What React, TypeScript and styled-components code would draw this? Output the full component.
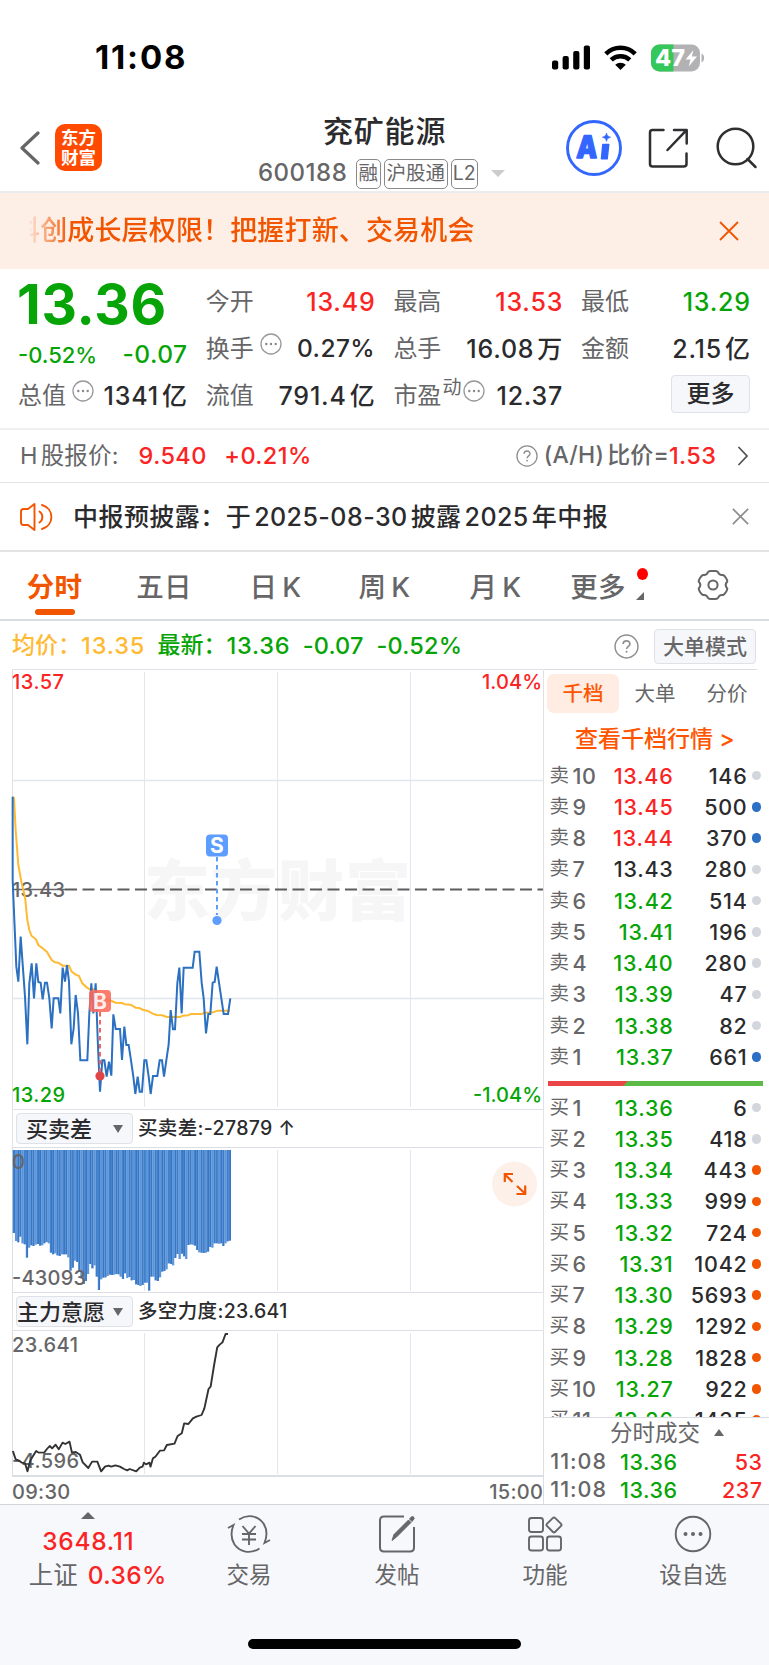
import React from "react";
import styled, { createGlobalStyle } from "styled-components";

const RED = "#fb2424";
const GREEN = "#06a406";
const ORANGE = "#f25500";
const INK = "#2b2b2d";
const GREY = "#666668";
const FONT = `Inter, "Noto Sans CJK SC", sans-serif`;

const Global = createGlobalStyle`
  * { box-sizing: border-box; }
  body { margin: 0; background: #fff; font-family: ${FONT}; }
`;

const Screen = styled.div`
  width: 769px;
  height: 1665px;
  overflow: hidden;
  display: flex;
  flex-direction: column;
  background: #fff;
  color: ${INK};
`;

const Text = styled.span<{ $size?: number; $weight?: number; $color?: string; $ls?: number; $ml?: number }>`
  font-size: ${(p) => p.$size ?? 24}px;
  font-weight: ${(p) => p.$weight ?? 540};
  color: ${(p) => p.$color ?? INK};
  letter-spacing: ${(p) => p.$ls ?? 0}px;
  margin-left: ${(p) => p.$ml ?? 0}px;
  margin-right: ${(p) => -(p.$ls ?? 0)}px;
  line-height: 1.2;
  white-space: pre;
`;

const Space = styled.span<{ $w: number }>`
  width: ${(p) => p.$w}px;
  flex: none;
`;

/* gap between Latin digits and Chinese characters */
const Gap = styled.span`
  display: inline-block;
  width: 3px;
`;

/* ---------- status bar and header ---------- */

const StatusBar = styled.div`
  height: 110px;
  flex: none;
  display: flex;
  justify-content: space-between;
  align-items: center;
  padding: 5px 64px 0 95px;
`;

const StatusIcons = styled.div`
  display: flex;
  align-items: center;
  gap: 14px;
`;

const Header = styled.header`
  height: 83px;
  flex: none;
  display: flex;
  border-bottom: 2px solid #ececee;
`;

const HeaderSide = styled.div<{ $width: number; $pad: number }>`
  width: ${(p) => p.$width}px;
  padding-left: ${(p) => p.$pad}px;
  height: 76px;
  display: flex;
  align-items: center;
`;

const Logo = styled.div`
  width: 47px;
  height: 47px;
  margin: -1px 0 0 15px;
  border-radius: 10px;
  background: #ff4a00;
  color: #fff;
  font-size: 17.5px;
  font-weight: 700;
  line-height: 19.5px;
  text-align: center;
  padding-top: 4px;
`;

const TitleBlock = styled.div`
  width: 280px;
  display: flex;
  flex-direction: column;
  padding-top: 2px;
`;

const TitleName = styled.div`
  font-size: 30px;
  font-weight: 500;
  letter-spacing: 0.8px;
  line-height: 38px;
  padding-left: 81px;
`;

const CodeLine = styled.div`
  display: flex;
  align-items: center;
  flex: none;
  height: 44px;
  padding: 3px 0 0 16px;
`;

const Tag = styled.span<{ $width: number }>`
  width: ${(p) => p.$width}px;
  flex: none;
  height: 30px;
  margin: 1px 3px 0 0;
  border: 1.5px solid #8a8a8c;
  border-radius: 5px;
  color: ${GREY};
  font-size: 19.5px;
  line-height: 27px;
  text-align: center;
  white-space: nowrap;
`;

/* ---------- banner ---------- */

const Banner = styled.div`
  height: 76px;
  flex: none;
  display: flex;
  align-items: center;
  justify-content: space-between;
  padding: 0 30px 0 30px;
  background: #fdeee6;
`;

const Marquee = styled.div`
  width: 600px;
  overflow: hidden;
  mask-image: linear-gradient(90deg, rgba(0, 0, 0, 0.1), #000 40px);
`;

const MarqueeText = styled.div`
  margin-left: -17px;
  font-size: 27px;
  font-weight: 500;
  letter-spacing: 0.15px;
  line-height: 40px;
  color: ${ORANGE};
  white-space: nowrap;
`;

/* ---------- quote ---------- */

const Quote = styled.section`
  height: 161px;
  flex: none;
  display: grid;
  grid-template-columns: repeat(4, 168px);
  grid-template-rows: repeat(3, 47px);
  column-gap: 19.7px;
  padding: 9px 19px 0;
  border-bottom: 2px solid #f0f0f2;
`;

const PriceBlock = styled.div`
  grid-row: span 2;
  display: flex;
  flex-direction: column;
`;

const Price = styled.div`
  font-size: 55px;
  font-weight: 750;
  line-height: 53px;
  letter-spacing: 0.7px;
  margin-left: -2px;
  color: ${GREEN};
`;

const Change = styled.div`
  display: flex;
  justify-content: space-between;
  align-items: center;
  padding-top: 9px;
  margin-left: -1px;
`;

const Cell = styled.div`
  display: flex;
  align-items: center;
  justify-content: space-between;
  white-space: nowrap;
`;

const CellLabel = styled.span`
  display: flex;
  align-items: center;
  margin-left: -1px;
  font-size: 24px;
  line-height: 30px;
  color: ${GREY};
  svg { margin: -10px 0 0 6px; }
  small { font-size: 19px; margin: -15px 0 0 1px; }
  small + svg { margin-left: 2px; }
`;

const SoftButton = styled.button<{ $width: number; $height: number; $size: number; $color: string; $lift?: number }>`
  width: ${(p) => p.$width}px;
  height: ${(p) => p.$height}px;
  flex: none;
  padding: 1px 0 0;
  margin-bottom: ${(p) => p.$lift ?? 0}px;
  border: 1.5px solid #dfe1e8;
  border-radius: 4px;
  background: #f6f7fa;
  font: 500 ${(p) => p.$size}px ${FONT};
  line-height: 1.2;
  color: ${(p) => p.$color};
  white-space: nowrap;
`;

/* ---------- lines under the quote ---------- */

const InfoRow = styled.div<{ $height: number; $line: number }>`
  height: ${(p) => p.$height}px;
  flex: none;
  display: flex;
  align-items: center;
  padding: 0 20px;
  border-bottom: ${(p) => p.$line}px solid #e3e3e6;
`;

const Push = styled.span`
  margin-left: auto;
  display: flex;
  align-items: center;
`;

const Tabs = styled.nav`
  height: 69px;
  flex: none;
  display: flex;
  border-bottom: 2px solid #dadce3;
`;

const Tab = styled.div<{ $width: number; $active?: boolean }>`
  position: relative;
  width: ${(p) => p.$width}px;
  display: flex;
  align-items: center;
  justify-content: center;
  font-size: 27.5px;
  font-weight: ${(p) => (p.$active ? 600 : 500)};
  letter-spacing: 0.3px;
  padding-bottom: 1px;
  color: ${(p) => (p.$active ? ORANGE : GREY)};
  &::after {
    content: "";
    display: ${(p) => (p.$active ? "block" : "none")};
    position: absolute;
    bottom: 4px;
    width: 40px;
    height: 6px;
    border-radius: 3px;
    background: ${ORANGE};
  }
`;

const NewDot = styled.i`
  position: absolute;
  top: 16px;
  right: 9px;
  width: 11px;
  height: 12px;
  border-radius: 50%;
  background: #ff0000;
`;

const Corner = styled.i`
  position: absolute;
  right: 13px;
  top: 40px;
  border-left: 8px solid transparent;
  border-bottom: 8px solid ${GREY};
`;

const AverageRow = styled.div`
  height: 48px;
  flex: none;
  display: flex;
  align-items: center;
  padding: 2px 13px 0 12px;
`;

/* ---------- chart and depth ---------- */

const Body = styled.main`
  height: 835px;
  flex: none;
  display: flex;
`;

const Charts = styled.div`
  width: 544px;
  display: flex;
  flex-direction: column;
  svg { display: block; flex: none; }
`;

const SelectorRow = styled.div`
  height: 37px;
  flex: none;
  display: flex;
  align-items: center;
  margin-left: 12px;
  padding-left: 3px;
  border-left: 1px solid #e3e4ea;
  border-right: 1px solid #e3e4ea;
`;

const Selector = styled.div<{ $pad: number }>`
  width: 117px;
  height: 31px;
  display: flex;
  align-items: center;
  justify-content: space-between;
  padding: 0 9px 0 ${(p) => p.$pad}px;
  margin-right: 5px;
  border: 1.5px solid #dfe1e8;
  border-radius: 4px;
  background: #f6f7fa;
  font-size: 22px;
  font-weight: 500;
  line-height: 26px;
  white-space: nowrap;
`;

const Caret = styled.i<{ $up?: boolean; $w: number; $h: number; $color: string }>`
  flex: none;
  border-left: ${(p) => p.$w / 2}px solid transparent;
  border-right: ${(p) => p.$w / 2}px solid transparent;
  ${(p) => (p.$up ? "border-bottom" : "border-top")}: ${(p) => p.$h}px solid ${(p) => p.$color};
`;

const TimeAxis = styled.div`
  height: 27px;
  display: flex;
  align-items: center;
  justify-content: space-between;
  padding: 2px 0 0 12px;
  border-right: 1px solid #dadce3;
`;

const Depth = styled.aside`
  width: 225px;
  display: flex;
  flex-direction: column;
`;

const DepthTabs = styled.div`
  height: 43px;
  flex: none;
  display: flex;
  margin: 0 12px 0 0;
  padding: 4px 0 0 3px;
  border-top: 1px solid #dadce3;
`;

const DepthTab = styled.div<{ $active?: boolean }>`
  width: 72px;
  height: 39px;
  flex: none;
  border-radius: 7px;
  background: ${(p) => (p.$active ? "#ffece2" : "transparent")};
  color: ${(p) => (p.$active ? "#ff5500" : GREY)};
  font-size: 20.5px;
  font-weight: ${(p) => (p.$active ? 500 : 400)};
  line-height: 39px;
  text-align: center;
`;

const DepthLink = styled.div`
  height: 48px;
  flex: none;
  padding: 2px 0 0 31px;
  font-size: 23px;
  font-weight: 500;
  line-height: 50px;
  color: #ff5500;
  white-space: nowrap;
`;

const Levels = styled.div<{ $height: number }>`
  height: ${(p) => p.$height}px;
  flex: none;
  overflow: hidden;
`;

const Level = styled.div`
  height: 31.26px;
  display: grid;
  grid-template-columns: 48px 76px 75px 12.500px;
  align-items: center;
  padding-left: 5.500px;
  font-size: 21.5px;
  font-weight: 540;
  letter-spacing: 0.75px;
  text-align: right;
`;

const LevelName = styled.span`
  display: flex;
  gap: 3px;
  color: ${GREY};
  font-weight: 450;
  letter-spacing: 0.5px;
  b { font-size: 19.5px; font-weight: 400; line-height: 25px; }
`;

const LevelPrice = styled.span<{ $color: string }>`
  color: ${(p) => p.$color};
`;

const LevelDot = styled.i<{ $color: string }>`
  justify-self: end;
  width: 9.5px;
  height: 9.5px;
  border-radius: 50%;
  background: ${(p) => p.$color};
`;

const Volume = styled.span`
  margin-right: 1px;
`;

const Balance = styled.div`
  height: 19px;
  flex: none;
  padding: 8px 6px 6px 4px;
  div {
    height: 5px;
    background: linear-gradient(135deg, #ea4648 56px, #5bbb46 57px);
  }
`;

const TradesHead = styled.div`
  height: 30px;
  flex: none;
  display: flex;
  align-items: center;
  padding-left: 66px;
  gap: 14px;
  border-top: 1px solid #dadce3;
`;

const Trade = styled.div`
  height: 28.5px;
  display: grid;
  grid-template-columns: 57px 71.5px 85px;
  align-items: center;
  padding: 1px 0 0 5px;
  font-size: 21.5px;
  font-weight: 540;
  letter-spacing: 0.5px;
  text-align: right;
  white-space: nowrap;
`;

/* ---------- bottom bar ---------- */

const BottomBar = styled.footer`
  height: 161px;
  flex: none;
  display: flex;
  flex-direction: column;
  align-items: center;
  background: #f7f8fb;
  border-top: 1px solid #d3d5db;
`;

const NavRow = styled.div`
  width: 100%;
  height: 134px;
  display: flex;
`;

const IndexBox = styled.div`
  width: 176px;
  display: flex;
  flex-direction: column;
  align-items: center;
  padding-top: 7px;
`;

const IndexLine = styled.div<{ $top: number; $left: number }>`
  height: 34px;
  display: flex;
  align-items: center;
  margin: ${(p) => p.$top}px 0 0 ${(p) => p.$left}px;
`;

const NavItem = styled.div`
  width: 148px;
  display: flex;
  flex-direction: column;
  align-items: center;
  padding: 10px 2px 0 0;
  color: ${GREY};
  font-size: 22.5px;
  line-height: 28px;
  svg { margin-bottom: 8px; }
`;

const HomeBar = styled.div`
  width: 273px;
  height: 10px;
  border-radius: 5px;
  background: #000;
`;

/* ---------- icons ---------- */

const Dots = () => (
  <svg width="22" height="22" viewBox="0 0 22 22">
    <circle cx="11" cy="11" r="10" fill="none" stroke="#98989a" strokeWidth="1.3" />
    {[6.3, 11, 15.7].map((x) => (
      <circle key={x} cx={x} cy="11" r="1.2" fill="#88888a" />
    ))}
  </svg>
);

const Help = ({ size }: { size: number }) => (
  <svg width={size} height={size} viewBox="0 0 24 24" fill="none" stroke="#8e8e90" strokeWidth="1.4">
    <circle cx="12" cy="12" r="11" />
    <path d="M8.8 9.6c0-4 6.5-4 6.5-.1 0 2.3-3.2 2.4-3.2 5" strokeWidth="1.6" />
    <circle cx="12.1" cy="17" r="1" fill="#8e8e90" stroke="none" />
  </svg>
);

const Cross = ({ size, color, width }: { size: number; color: string; width: number }) => (
  <svg width={size} height={size} viewBox="0 0 20 20" stroke={color} strokeWidth={width}>
    <path d="M1 1L19 19M19 1L1 19" />
  </svg>
);

const Signal = () => (
  <svg width="38" height="25" viewBox="0 0 38 25">
    <rect x="0" y="15.5" width="6.2" height="9" rx="2" />
    <rect x="10.6" y="11" width="6.2" height="13.5" rx="2" />
    <rect x="21.2" y="6" width="6.2" height="18.5" rx="2" />
    <rect x="31.8" y="0.5" width="6.2" height="24" rx="2" />
  </svg>
);

const Wifi = () => (
  <svg width="33" height="25" viewBox="0 0 33 25" fill="none" stroke="#000" strokeWidth="4.5">
    <path d="M1.8 8.8C10 .6 23 .6 31.2 8.8" />
    <path d="M7.2 14.8c5.200-4.900 13.400-4.900 18.600 0" />
    <path d="M16.5 25l-5.300-5.300c3-2.700 7.600-2.700 10.600 0z" fill="#000" stroke="none" />
  </svg>
);

const Battery = () => (
  <svg width="54" height="28" viewBox="0 0 54 28">
    <defs>
      <clipPath id="cell">
        <rect x="0" y="0.5" width="49" height="27" rx="8.5" />
      </clipPath>
    </defs>
    <rect width="49" height="28" fill="#b2b2b4" clipPath="url(#cell)" />
    <rect width="22.5" height="28" fill="#34c759" clipPath="url(#cell)" />
    <path d="M50.5 9.5c3.5 1.5 3.500 7.500 0 9z" fill="#b2b2b4" />
    <text x="4" y="22.300" fontSize="23" fontWeight="800" fill="#fff" textLength="30" lengthAdjust="spacingAndGlyphs">47</text>
    <path d="M42.500 6L34.500 15.600h5l-1.800 6.800 8.300-9.800h-5.200z" fill="#fff" />
  </svg>
);

const Back = () => (
  <svg width="20" height="34" viewBox="0 0 20 34" fill="none" stroke="#666" strokeWidth="3.200" strokeLinecap="round" strokeLinejoin="round">
    <path d="M18 2L2 17l16 15" />
  </svg>
);

const Assistant = () => (
  <svg width="56" height="56" viewBox="0 0 56 56" fill="none">
    <circle cx="28" cy="28" r="26.500" stroke="#3366ff" strokeWidth="2.900" />
    <text x="10" y="38" fontSize="31" fontWeight="900" fill="#3366ff" stroke="#3366ff" strokeWidth="1.300" strokeLinejoin="round" textLength="21" lengthAdjust="spacingAndGlyphs" transform="skewX(-3) translate(2 0)">A</text>
    <path d="M36.800 24.500h6L41.200 38.800h-5.800z" fill="#3366ff" stroke="#3366ff" strokeWidth="1.400" strokeLinejoin="round" />
    <path d="M40.500 13c.8 2.800 1.400 3.400 4.200 4.200-2.800.8-3.400 1.400-4.200 4.200-.8-2.800-1.400-3.400-4.200-4.200 2.800-.8 3.400-1.400 4.200-4.200z" fill="#3366ff" stroke="#3366ff" strokeWidth=".6" />
  </svg>
);

const Share = () => (
  <svg width="41" height="41" viewBox="0 0 41 41" fill="none" stroke="#2f2f31" strokeWidth="2.500" strokeLinejoin="round" strokeLinecap="round">
    <path d="M15.500 2H4.500Q2 2 2 4.500v31.500Q2 38.500 4.500 38.500h31Q38.500 38.500 38.500 36V25.500" />
    <path d="M26 2h12.700v13.500M38 2.700L19.500 22" />
  </svg>
);

const Search = () => (
  <svg width="42" height="42" viewBox="0 0 42 42" fill="none" stroke="#2f2f31" strokeWidth="2.500" strokeLinecap="round">
    <circle cx="19.500" cy="19.500" r="17.800" />
    <path d="M31.500 32l8 8" />
  </svg>
);

const Speaker = () => (
  <svg width="33" height="28" viewBox="0 0 33 28" fill="none" stroke={ORANGE} strokeWidth="1.9" strokeLinejoin="round">
    <path d="M14.500 1L8 6H3.500Q1 6 1 8.500v11Q1 22 3.500 22H8l6.500 5z" />
    <path d="M19.500 8.500c3.800 2.500 3.800 8.500 0 11M22 2c12.500 3.500 12.500 20.500 0 24" strokeLinecap="round" />
  </svg>
);

const Chevron = () => (
  <svg width="12" height="20" viewBox="0 0 12 20" fill="none" stroke="#555" strokeWidth="1.8">
    <path d="M1.500 1l8.500 9-8.500 9" />
  </svg>
);

const Gear = () => (
  <svg width="32" height="32" viewBox="0 0 32 32" fill="none" stroke={GREY} strokeWidth="2" strokeLinejoin="round">
    <path d="M11 3q1.200-1 2.700-1h4.600q1.500 0 2.700 1c.8 2.500 2 3.500 5 3 1.800.6 4.300 4.600 4.300 6.500-2.300 2.500-2.300 4.500 0 7 0 1.900-2.500 5.900-4.300 6.500-3-.5-4.200.5-5 3q-1.200 1-2.700 1h-4.600q-1.500 0-2.700-1c-.8-2.500-2-3.500-5-3-1.800-.6-4.300-4.600-4.300-6.500 2.300-2.500 2.300-4.500 0-7C1.700 10.600 4.200 6.600 6 6c3 .5 4.200-.5 5-3z" />
    <circle cx="16" cy="16" r="4.600" />
  </svg>
);

const TradeIcon = () => (
  <svg width="44" height="38" viewBox="0 0 44 38" fill="none" stroke={GREY} strokeWidth="1.900">
    <path d="M12 4.500C21-1.500 31 1 36.500 8.500c3.500 5.500 4 12 1 19.500l5.500-3M32.500 33.500C23 39.500 13 37 7.500 29.500c-3.500-5.500-4-12-1-19.500L1 13" />
    <path d="M15.500 11l6.500 7.500 6.500-7.500M15 19h14M15 24.500h14M22 18.500V30" />
  </svg>
);

const PostIcon = () => (
  <svg width="38" height="38" viewBox="0 0 38 38" fill="none" stroke={GREY} strokeWidth="2">
    <path d="M26 1.500H6Q2 1.500 2 5.500v27q0 4 4 4h26q4 0 4-4V12" />
    <path d="M14 25.500l2-6L30.500 5l2.500 2.500L18.500 22zM31.500 4l2-2.200q2.500-.8 2.700 1.800L34 6.500z" fill={GREY} strokeWidth="1" />
  </svg>
);

const GridIcon = () => (
  <svg width="38" height="38" viewBox="0 0 38 38" fill="none" stroke={GREY} strokeWidth="1.900">
    <rect x="3" y="3" width="14" height="14" rx="2.500" />
    <rect x="3" y="21.500" width="14" height="14" rx="2.500" />
    <rect x="21" y="21.500" width="14" height="14" rx="2.500" />
    <rect x="22.200" y="4.200" width="11.500" height="11.500" rx="1.800" transform="rotate(45 28 10)" />
  </svg>
);

const MoreIcon = () => (
  <svg width="38" height="38" viewBox="0 0 38 38">
    <circle cx="19" cy="19" r="17.300" fill="none" stroke={GREY} strokeWidth="1.900" />
    {[11.500, 19, 26.500].map((x) => (
      <circle key={x} cx={x} cy="19" r="2" fill={GREY} />
    ))}
  </svg>
);

/* ---------- chart data ---------- */

const priceLine =
  "38,50 38,300 43,420 49,560 55,605 62,470 70,580 75,650 82,793 88,610 95,550 102,655 109,550 115,606 122,608 128,658 135,608 141,608 148,655 155,745 161,655 175,655 181,700 188,563 195,605 201,555 207,605 214,793 221,745 227,645 234,700 241,841 262,841 268,700 274,610 280,700 287,610 294,800 300,935 307,841 313,841 320,890 327,845 334,887 340,703 347,747 360,747 366,840 373,740 379,795 386,795 393,841 400,890 406,942 413,890 419,935 426,935 433,841 439,841 446,890 452,942 459,888 472,888 479,841 486,841 492,890 499,841 506,793 512,690 519,748 525,748 532,610 538,563 545,700 551,563 578,563 584,515 598,515 605,608 611,655 618,760 625,702 631,702 638,608 644,606 650,560 657,608 664,655 671,702 684,702 691,655";
const averageLine =
  "38,50 42,55 47,150 55,255 65,310 75,350 82,420 88,450 95,468 108,478 115,495 128,505 141,516 155,540 165,547 175,548 188,557 207,557 215,575 227,584 237,588 247,610 260,622 270,628 285,628 300,640 310,655 335,663 347,668 367,669 373,673 392,674 407,683 418,684 430,690 442,692 458,701 470,705 487,706 500,711 540,711 548,707 565,706 572,702 605,702 615,698 640,697 652,692 690,692";
const willLine =
  "37,483 45,508 55,512 63,518 72,520 79,544 87,512 95,498 104,483 112,488 128,487 135,477 143,468 150,475 160,464 169,478 180,458 188,462 200,455 207,488 218,486 230,494 238,517 254,534 265,515 280,515 291,544 302,530 312,527 320,530 332,526 345,530 357,537 366,541 373,537 392,544 402,533 410,530 414,518 420,523 430,518 433,530 440,505 447,500 460,482 472,481 480,465 502,461 511,438 523,430 530,400 542,402 555,385 565,380 580,375 588,355 600,297 606,290 616,225 625,172 632,164 640,157 649,132 656,132";
const diffBars = [
  399, 423, 427, 410, 430, 433, 473, 443, 436, 438, 434, 432, 437, 436, 430, 426, 430, 458, 463, 460, 466, 468, 463,
  463, 463, 472, 512, 503, 482, 486, 515, 535, 552, 543, 522, 492, 505, 496, 530, 570, 538, 533, 532, 528, 524, 525,
  524, 522, 523, 530, 537, 520, 534, 531, 541, 540, 553, 555, 558, 555, 548, 548, 572, 530, 530, 541, 543, 532, 515,
  513, 508, 490, 492, 496, 474, 462, 477, 461, 469, 477, 435, 433, 434, 437, 450, 457, 458, 459, 458, 455, 441, 443,
  430, 430, 431, 430, 438, 430, 424, 422,
];
const barStep = 218.2 / diffBars.length;

const AxisText = ({ x, y, width, color = GREY, children }: { x: number; y: number; width: number; color?: string; children: string }) => (
  <text x={x} y={y} fontSize="20" fontWeight="540" fill={color} textLength={width}>
    {children}
  </text>
);

const Grid = ({ top, bottom }: { top: number; bottom: number }) => (
  <path d={[144.5, 277.5, 410.5].map((x) => `M${x} ${top}V${bottom}`).join("")} stroke="#e4e6ef" />
);

const PriceChart = () => (
  <svg width="544" height="441" viewBox="0 669 544 441" fill="none">
    <text x="144" y="915" fontSize="66" fontWeight="900" fill="#f6f6f6" textLength="267">东方财富</text>
    <Grid top={672} bottom={1107} />
    <path d="M12 780.5H543M12 998.500H543" stroke="#e0e5ee" strokeWidth="1.300" />
    <path d="M12.500 1109.500V669.500H543.500V1109.500z" stroke="#e0e1e7" />
    <AxisText x={12} y={896.5} width={53}>13.43</AxisText>
    <path d="M12 889.500H65" stroke={GREY} strokeWidth="1.500" />
    <path d="M65 889.500H543" stroke="#5c5c5e" strokeWidth="2" strokeDasharray="12 5.500" />
    <g transform="translate(0 780) scale(.33333)" strokeWidth="6" strokeLinejoin="miter">
      <polyline points={averageLine} stroke="#ffba33" />
      <polyline points={priceLine} stroke="#2b70c1" />
    </g>
    <path d="M217 857V915" stroke="#5c9dff" strokeWidth="2" strokeDasharray="4.500 3.500" />
    <circle cx="217" cy="920.500" r="4.600" fill="#5c9dff" />
    <rect x="206" y="834.500" width="22" height="22" rx="4" fill="#5c9dff" />
    <text x="217" y="853" fontSize="21" fontWeight="700" fill="#fff" textAnchor="middle">S</text>
    <path d="M100 1012V1072" stroke="#fb6357" strokeWidth="2" strokeDasharray="4.500 3.500" />
    <circle cx="100" cy="1076" r="4.600" fill="#e04444" />
    <rect x="89" y="990" width="22" height="22" rx="4" fill="#fc6a5b" fillOpacity=".88" />
    <text x="100" y="1008.500" fontSize="21" fontWeight="700" fill="#fff" fillOpacity=".9" textAnchor="middle">B</text>
    <AxisText x={12} y={689} width={52} color={RED}>13.57</AxisText>
    <AxisText x={482} y={689} width={60} color={RED}>1.04%</AxisText>
    <AxisText x={12} y={1102} width={53} color={GREEN}>13.29</AxisText>
    <AxisText x={473} y={1102} width={69} color={GREEN}>-1.04%</AxisText>
  </svg>
);

const DiffChart = () => (
  <svg width="544" height="146" viewBox="0 1147 544 146" fill="none">
    <Grid top={1150} bottom={1291} />
    <path d="M12 1147.500H543.500V1292.500H12.500V1147.500" stroke="#dcdee5" />
    {diffBars.map((v, i) => (
      <rect key={i} x={12.8 + i * barStep} y="1150" width={barStep} height={v / 3 - 50} fill={i % 3 === 1 ? "#5d96d8" : "#3576c6"} />
    ))}
    {diffBars.map((v, i) => (
      <path key={i} d={`M${13.2 + i * barStep} 1150V${1100 + v / 3}`} stroke="#5c95d6" strokeWidth=".500" />
    ))}
    <AxisText x={12} y={1169} width={12}>0</AxisText>
    <AxisText x={12} y={1284.5} width={74}>-43093</AxisText>
    <circle cx="514.500" cy="1184" r="22.500" fill="#fdf0e9" />
    <path d="M504.800 1182V1174H513M505 1174.500L512.500 1182M525.200 1185.500V1194H516.500M525 1193.500L517 1186" stroke={ORANGE} strokeWidth="2.200" />
  </svg>
);

const WillChart = () => (
  <svg width="544" height="147" viewBox="0 1330 544 147" fill="none">
    <Grid top={1333} bottom={1474} />
    <path d="M12.500 1476V1330.500H543.500V1476" stroke="#dcdee5" />
    <path d="M12 1476H544" stroke="#dcdee5" strokeWidth="2" />
    <AxisText x={12} y={1352} width={66}>23.641</AxisText>
    <AxisText x={12} y={1467.5} width={67}>-4.596</AxisText>
    <g transform="translate(0 1290) scale(.34757 .33333)">
      <polyline points={willLine} stroke="#333" strokeWidth="5.500" strokeLinejoin="round" />
    </g>
  </svg>
);

/* ---------- depth data ---------- */

const LIGHT = "#d3d6dc";
const BLUE = "#2b70c5";
type Row = [string, string, string, string];
const asks: Row[] = [
  ["10", "13.46", "146", LIGHT],
  ["9", "13.45", "500", BLUE],
  ["8", "13.44", "370", BLUE],
  ["7", "13.43", "280", LIGHT],
  ["6", "13.42", "514", LIGHT],
  ["5", "13.41", "196", LIGHT],
  ["4", "13.40", "280", LIGHT],
  ["3", "13.39", "47", LIGHT],
  ["2", "13.38", "82", LIGHT],
  ["1", "13.37", "661", BLUE],
];
const bids: Row[] = [
  ["1", "13.36", "6", LIGHT],
  ["2", "13.35", "418", LIGHT],
  ["3", "13.34", "443", ORANGE],
  ["4", "13.33", "999", ORANGE],
  ["5", "13.32", "724", ORANGE],
  ["6", "13.31", "1042", ORANGE],
  ["7", "13.30", "5693", ORANGE],
  ["8", "13.29", "1292", ORANGE],
  ["9", "13.28", "1828", ORANGE],
  ["10", "13.27", "922", ORANGE],
  ["11", "13.26", "1435", ORANGE],
];

const levelColor = (price: string) => (+price > 13.43 ? RED : +price < 13.43 ? GREEN : INK);

const LevelList = ({ side, rows, height }: { side: string; rows: Row[]; height: number }) => (
  <Levels $height={height}>
    {rows.map(([n, price, volume, dot]) => (
      <Level key={n}>
        <LevelName><b>{side}</b>{n}</LevelName>
        <LevelPrice $color={levelColor(price)}>{price}</LevelPrice>
        <Volume>{volume}</Volume>
        <LevelDot $color={dot} />
      </Level>
    ))}
  </Levels>
);

const navItems: [string, () => React.ReactElement][] = [
  ["交易", TradeIcon],
  ["发帖", PostIcon],
  ["功能", GridIcon],
  ["设自选", MoreIcon],
];

const Value = ({ color = INK, unit, children }: { color?: string; unit?: string; children: string }) => (
  <Text $size={25} $ls={0.8} $color={color}>
    {children}
    {unit && <><Gap />{unit}</>}
  </Text>
);

export default function App() {
  return (
    <Screen>
      <Global />
      <StatusBar>
        <Text $size={33} $weight={700} $color="#000" $ls={1.8}>11:08</Text>
        <StatusIcons>
          <Signal />
          <Wifi />
          <Battery />
        </StatusIcons>
      </StatusBar>

      <Header>
        <HeaderSide $width={242} $pad={20}>
          <Back />
          <Logo>东方<br />财富</Logo>
        </HeaderSide>
        <TitleBlock>
          <TitleName>兖矿能源</TitleName>
          <CodeLine>
            <Text $color={GREY} $ls={0.5}>600188</Text>
            <Space $w={9} />
            <Tag $width={25}>融</Tag>
            <Tag $width={64}>沪股通</Tag>
            <Tag $width={27}>L2</Tag>
            <Space $w={10} />
            <Caret $w={14} $h={7} $color="#ccc" />
          </CodeLine>
        </TitleBlock>
        <HeaderSide $width={247} $pad={44}>
          <Assistant />
          <Space $w={26} />
          <Share />
          <Space $w={27} />
          <Search />
        </HeaderSide>
      </Header>

      <Banner>
        <Marquee>
          <MarqueeText>科创成长层权限！把握打新、交易机会</MarqueeText>
        </Marquee>
        <Cross size={20} color={ORANGE} width={1.8} />
      </Banner>

      <Quote>
        <PriceBlock>
          <Price>13.36</Price>
          <Change>
            <Text $size={22} $color={GREEN}>-0.52%</Text>
            <Text $size={24.5} $color={GREEN} $ls={0.5}>-0.07</Text>
          </Change>
        </PriceBlock>
        <Cell><CellLabel>今开</CellLabel><Value color={RED}>13.49</Value></Cell>
        <Cell><CellLabel>最高</CellLabel><Value color={RED}>13.53</Value></Cell>
        <Cell><CellLabel>最低</CellLabel><Value color={GREEN}>13.29</Value></Cell>
        <Cell><CellLabel>换手<Dots /></CellLabel><Text $size={24.5} $ls={0.4}>0.27%</Text></Cell>
        <Cell><CellLabel>总手</CellLabel><Value unit="万">16.08</Value></Cell>
        <Cell><CellLabel>金额</CellLabel><Value unit="亿">2.15</Value></Cell>
        <Cell><CellLabel>总值<Dots /></CellLabel><Value unit="亿">1341</Value></Cell>
        <Cell><CellLabel>流值</CellLabel><Value unit="亿">791.4</Value></Cell>
        <Cell><CellLabel>市盈<small>动</small><Dots /></CellLabel><Value>12.37</Value></Cell>
        <Cell><span /><SoftButton $width={79} $height={38} $size={24} $color={INK} $lift={4}>更多</SoftButton></Cell>
      </Quote>

      <InfoRow $height={53} $line={1}>
        <Text $size={23.5} $weight={400} $color={GREY} $ls={0.2}>H<Gap />股报价:</Text>
        <Text $size={23.5} $color={RED} $ls={0.4} $ml={20}>9.540</Text>
        <Text $size={23.5} $color={RED} $ls={0.4} $ml={18}>+0.21%</Text>
        <Push>
          <Help size={22} />
          <Text $size={23} $weight={500} $color={GREY} $ls={0.2} $ml={6}>(A/H)<Gap />比价=</Text>
          <Text $size={23.5} $color={RED} $ls={0.4}>1.53</Text>
          <Space $w={21} />
          <Chevron />
        </Push>
      </InfoRow>

      <InfoRow $height={69} $line={2}>
        <Speaker />
        <Text $size={25} $weight={500} $ml={20} $ls={0.45}>
          中报预披露：于<Gap />2025-08-30<Gap />披露<Gap />2025<Gap />年中报
        </Text>
        <Push><Cross size={17} color="#8e8e90" width={2} /></Push>
      </InfoRow>

      <Tabs>
        <Tab $width={109} $active>分时</Tab>
        <Tab $width={110}>五日</Tab>
        <Tab $width={113}>日{"\u2009"}K</Tab>
        <Tab $width={105}>周{"\u2009"}K</Tab>
        <Tab $width={117}>月{"\u2009"}K</Tab>
        <Tab $width={88}>更多</Tab>
        <Tab $width={15}><NewDot /><Corner /></Tab>
        <Tab $width={112}><Gear /></Tab>
      </Tabs>

      <AverageRow>
        <Text $size={23} $weight={500} $color="#ffba33">均价：</Text>
        <Text $size={23.5} $color="#ffba33" $ls={0.9}>13.35</Text>
        <Text $size={23} $weight={500} $color={GREEN} $ml={13}>最新：</Text>
        <Text $size={23.5} $color={GREEN} $ls={0.8}>13.36</Text>
        <Text $size={23.5} $color={GREEN} $ml={13} $ls={0.2}>-0.07</Text>
        <Text $size={23.5} $color={GREEN} $ml={13} $ls={0.2}>-0.52%</Text>
        <Push>
          <Help size={25} />
          <Space $w={15} />
          <SoftButton $width={102} $height={35} $size={21} $color={GREY}>大单模式</SoftButton>
        </Push>
      </AverageRow>

      <Body>
        <Charts>
          <PriceChart />
          <SelectorRow>
            <Selector $pad={9}>买卖差<Caret $w={10} $h={8} $color={GREY} /></Selector>
            <Text $size={19.5} $weight={520} $ls={0.35}>买卖差:-27879 ↑</Text>
          </SelectorRow>
          <DiffChart />
          <SelectorRow>
            <Selector $pad={0}>主力意愿<Caret $w={10} $h={8} $color={GREY} /></Selector>
            <Text $size={19.5} $weight={520} $ls={0.35}>多空力度:23.641</Text>
          </SelectorRow>
          <WillChart />
          <TimeAxis>
            <Text $size={20} $color={GREY} $ls={0.3}>09:30</Text>
            <Text $size={20} $color={GREY} $ls={0.3}>15:00</Text>
          </TimeAxis>
        </Charts>

        <Depth>
          <DepthTabs>
            <DepthTab $active>千档</DepthTab>
            <DepthTab>大单</DepthTab>
            <DepthTab>分价</DepthTab>
          </DepthTabs>
          <DepthLink>查看千档行情 &gt;</DepthLink>
          <LevelList side="卖" rows={asks} height={313} />
          <Balance><div /></Balance>
          <LevelList side="买" rows={bids} height={325} />
          <TradesHead>
            <Text $size={22.5} $weight={400} $color={GREY}>分时成交</Text>
            <Caret $up $w={10} $h={7} $color={GREY} />
          </TradesHead>
          {["53", "237"].map((volume) => (
            <Trade key={volume}>
              <Text $size={21.5} $weight={500} $color={GREY} $ls={1}>11:08</Text>
              <LevelPrice $color={GREEN}>13.36</LevelPrice>
              <LevelPrice $color={RED}>{volume}</LevelPrice>
            </Trade>
          ))}
        </Depth>
      </Body>

      <BottomBar>
        <NavRow>
          <IndexBox>
            <Caret $up $w={14} $h={7} $color={GREY} />
            <IndexLine $top={6} $left={0}>
              <Text $size={24.5} $color={RED} $ls={0.7}>3648.11</Text>
            </IndexLine>
            <IndexLine $top={0} $left={19}>
              <Text $size={24.5} $weight={400} $color={GREY}>上证</Text>
              <Text $size={24.5} $color={RED} $ls={0.4} $ml={10}>0.36%</Text>
            </IndexLine>
          </IndexBox>
          {navItems.map(([label, Icon]) => (
            <NavItem key={label}><Icon />{label}</NavItem>
          ))}
        </NavRow>
        <HomeBar />
      </BottomBar>
    </Screen>
  );
}
